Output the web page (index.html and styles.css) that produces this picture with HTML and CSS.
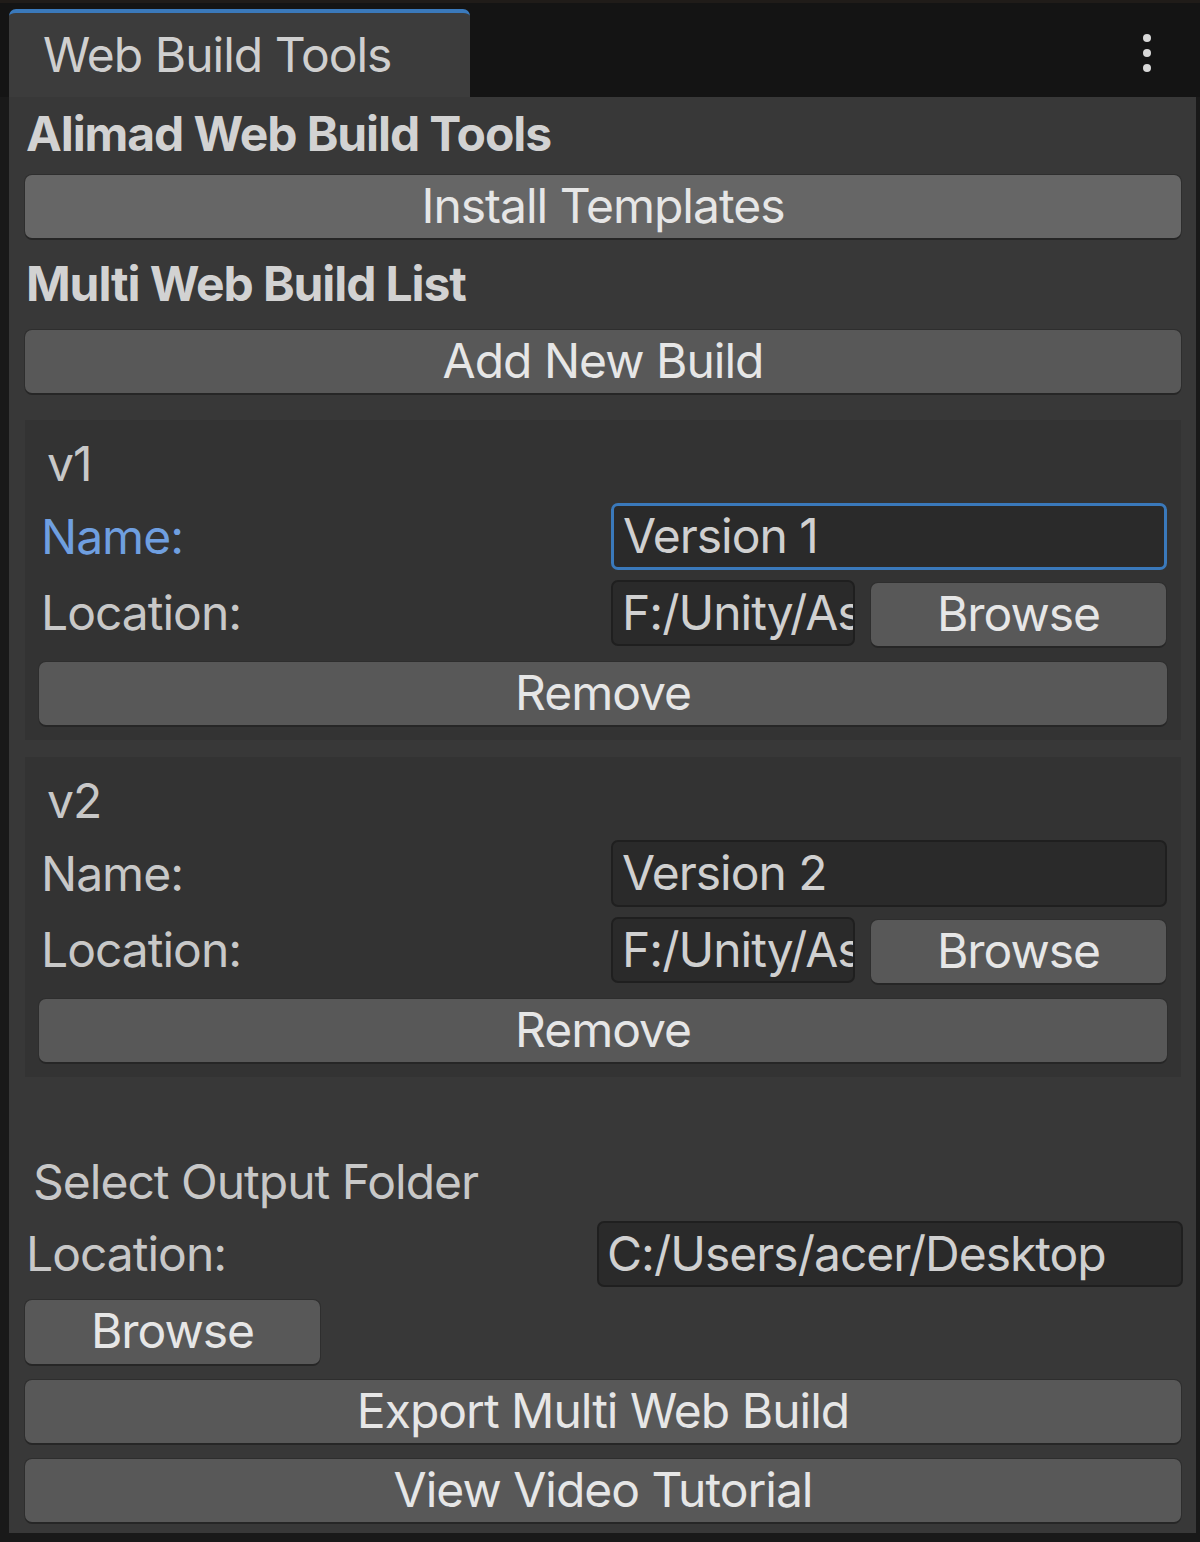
FILE: index.html
```html
<!DOCTYPE html>
<html>
<head>
<meta charset="utf-8">
<link rel="stylesheet" href="styles.css">
</head>
<body>
<div class="window">
  <div class="tabbar">
    <div class="tab">Web Build Tools</div>
    <div class="menu">
      <svg width="12" height="42" viewBox="0 0 12 42">
        <circle cx="6" cy="6" r="4" fill="#d8d8d8"/>
        <circle cx="6" cy="21" r="4" fill="#d8d8d8"/>
        <circle cx="6" cy="36" r="4" fill="#d8d8d8"/>
      </svg>
    </div>
  </div>
  <div class="panel">
    <div class="heading h-first">Alimad Web Build Tools</div>
    <div class="btn btn-hover btn-install">Install Templates</div>
    <div class="heading h-second">Multi Web Build List</div>
    <div class="btn btn-add">Add New Build</div>

    <div class="box box-first">
      <div class="box-title">v1</div>
      <div class="row row-name">
        <div class="label label-focus">Name:</div>
        <div class="field field-focus">Version 1</div>
      </div>
      <div class="row row-loc">
        <div class="label">Location:</div>
        <div class="field field-path">F:/Unity/As</div>
        <div class="btn btn-browse">Browse</div>
      </div>
      <div class="btn btn-remove">Remove</div>
    </div>

    <div class="box box-second">
      <div class="box-title">v2</div>
      <div class="row row-name">
        <div class="label">Name:</div>
        <div class="field">Version 2</div>
      </div>
      <div class="row row-loc">
        <div class="label">Location:</div>
        <div class="field field-path">F:/Unity/As</div>
        <div class="btn btn-browse">Browse</div>
      </div>
      <div class="btn btn-remove">Remove</div>
    </div>

    <div class="section-title">Select Output Folder</div>
    <div class="row row-output">
      <div class="label label-output">Location:</div>
      <div class="field field-output">C:/Users/acer/Desktop</div>
    </div>
    <div class="btn btn-small">Browse</div>
    <div class="btn btn-export">Export Multi Web Build</div>
    <div class="btn btn-video">View Video Tutorial</div>
  </div>
</div>
</body>
</html>
```

FILE: styles.css
```css
* {
  box-sizing: border-box;
}

html, body {
  margin: 0;
  padding: 0;
}

body {
  background: #191919;
  font-family: Inter, "Noto Sans", "Liberation Sans", sans-serif;
  font-size: 48px;
  letter-spacing: -1px;
  color: #c8c8c8;
  width: 1200px;
  height: 1542px;
  overflow: hidden;
}

.window {
  width: 1200px;
  height: 1542px;
  display: flex;
  flex-direction: column;
}

/* ---------- tab strip ---------- */
.tabbar {
  height: 97px;
  flex: none;
  background: #141414;
  border-top: 3px solid #201c19;
  display: flex;
  align-items: flex-end;
  padding-left: 9px;
}

.tab {
  width: 461px;
  height: 88px;
  background: #3c3c3c;
  border-top: 4px solid #3a79bb;
  border-radius: 7px 7px 0 0;
  color: #cfcfcf;
  padding-left: 34px;
  line-height: 84px;
}

.menu {
  margin-left: auto;
  margin-right: 47px;
  align-self: flex-start;
  margin-top: 29px;
  display: flex;
}

/* ---------- panel ---------- */
.panel {
  flex: none;
  margin-left: 9px;
  width: 1187px;
  height: 1436px;
  background: #383838;
  padding: 9px 13px 0 16px;
  display: flex;
  flex-direction: column;
}

.heading {
  font-weight: 700;
  color: #d2d2d2;
  line-height: 56px;
  height: 56px;
  padding-left: 1px;
  letter-spacing: -1.1px;
}

.h-first {
  margin-top: 0;
}

.h-second {
  margin-top: 18px;
}

/* ---------- buttons ---------- */
.btn {
  background: #585858;
  color: #e6e6e6;
  border-radius: 7px;
  text-align: center;
  height: 63px;
  line-height: 61px;
  margin-right: 2px;
  box-shadow: 0 2px 0 #262626, 0 0 0 1px #2e2e2e;
}

.btn-hover {
  background: #666666;
}

.btn-install {
  margin-top: 13px;
}

.btn-add {
  margin-top: 18px;
}

/* ---------- boxes ---------- */
.box {
  background: #333333;
  height: 320px;
  margin-right: 2px;
  padding: 16px 14px 0 14px;
  display: flex;
  flex-direction: column;
}

.box-first {
  margin-top: 27px;
}

.box-second {
  margin-top: 17px;
}

.box-title {
  line-height: 56px;
  height: 56px;
  padding-left: 8px;
  color: #c8c8c8;
}

.row {
  display: flex;
  align-items: center;
}

.row-name {
  margin-top: 11px;
  height: 67px;
}

.row-loc {
  margin-top: 9px;
  height: 67px;
}

.label {
  width: 572px;
  flex: none;
  padding-left: 2px;
  line-height: 56px;
  color: #c8c8c8;
}

.label-focus {
  color: #6f9fe0;
}

.field {
  background: #2a2a2a;
  border: 2px solid #1f1f1f;
  border-radius: 7px;
  height: 66px;
  line-height: 61px;
  padding-left: 9px;
  color: #d0d0d0;
  white-space: nowrap;
  overflow: hidden;
}

.row-name .field {
  width: 557px;
  height: 67px;
}

.field-focus {
  border: 3px solid #3a79bb;
  line-height: 60px;
}

.field-path {
  width: 244px;
  flex: none;
}

.btn-browse {
  width: 295px;
  flex: none;
  margin-left: 16px;
  margin-right: 0;
  margin-top: 3px;
}

.btn-remove {
  margin-top: 16px;
  margin-right: 0;
  height: 63px;
}

/* ---------- output ---------- */
.section-title {
  margin-top: 77px;
  line-height: 56px;
  height: 56px;
  padding-left: 8px;
  color: #c8c8c8;
}

.row-output {
  margin-top: 11px;
  height: 66px;
}

.label-output {
  padding-left: 1px;
}

.field-output {
  flex: 1;
  height: 66px;
  padding-left: 8px;
}

.btn-small {
  width: 295px;
  margin-top: 13px;
  height: 64px;
}

.btn-export {
  margin-top: 16px;
}

.btn-video {
  margin-top: 16px;
}
```
